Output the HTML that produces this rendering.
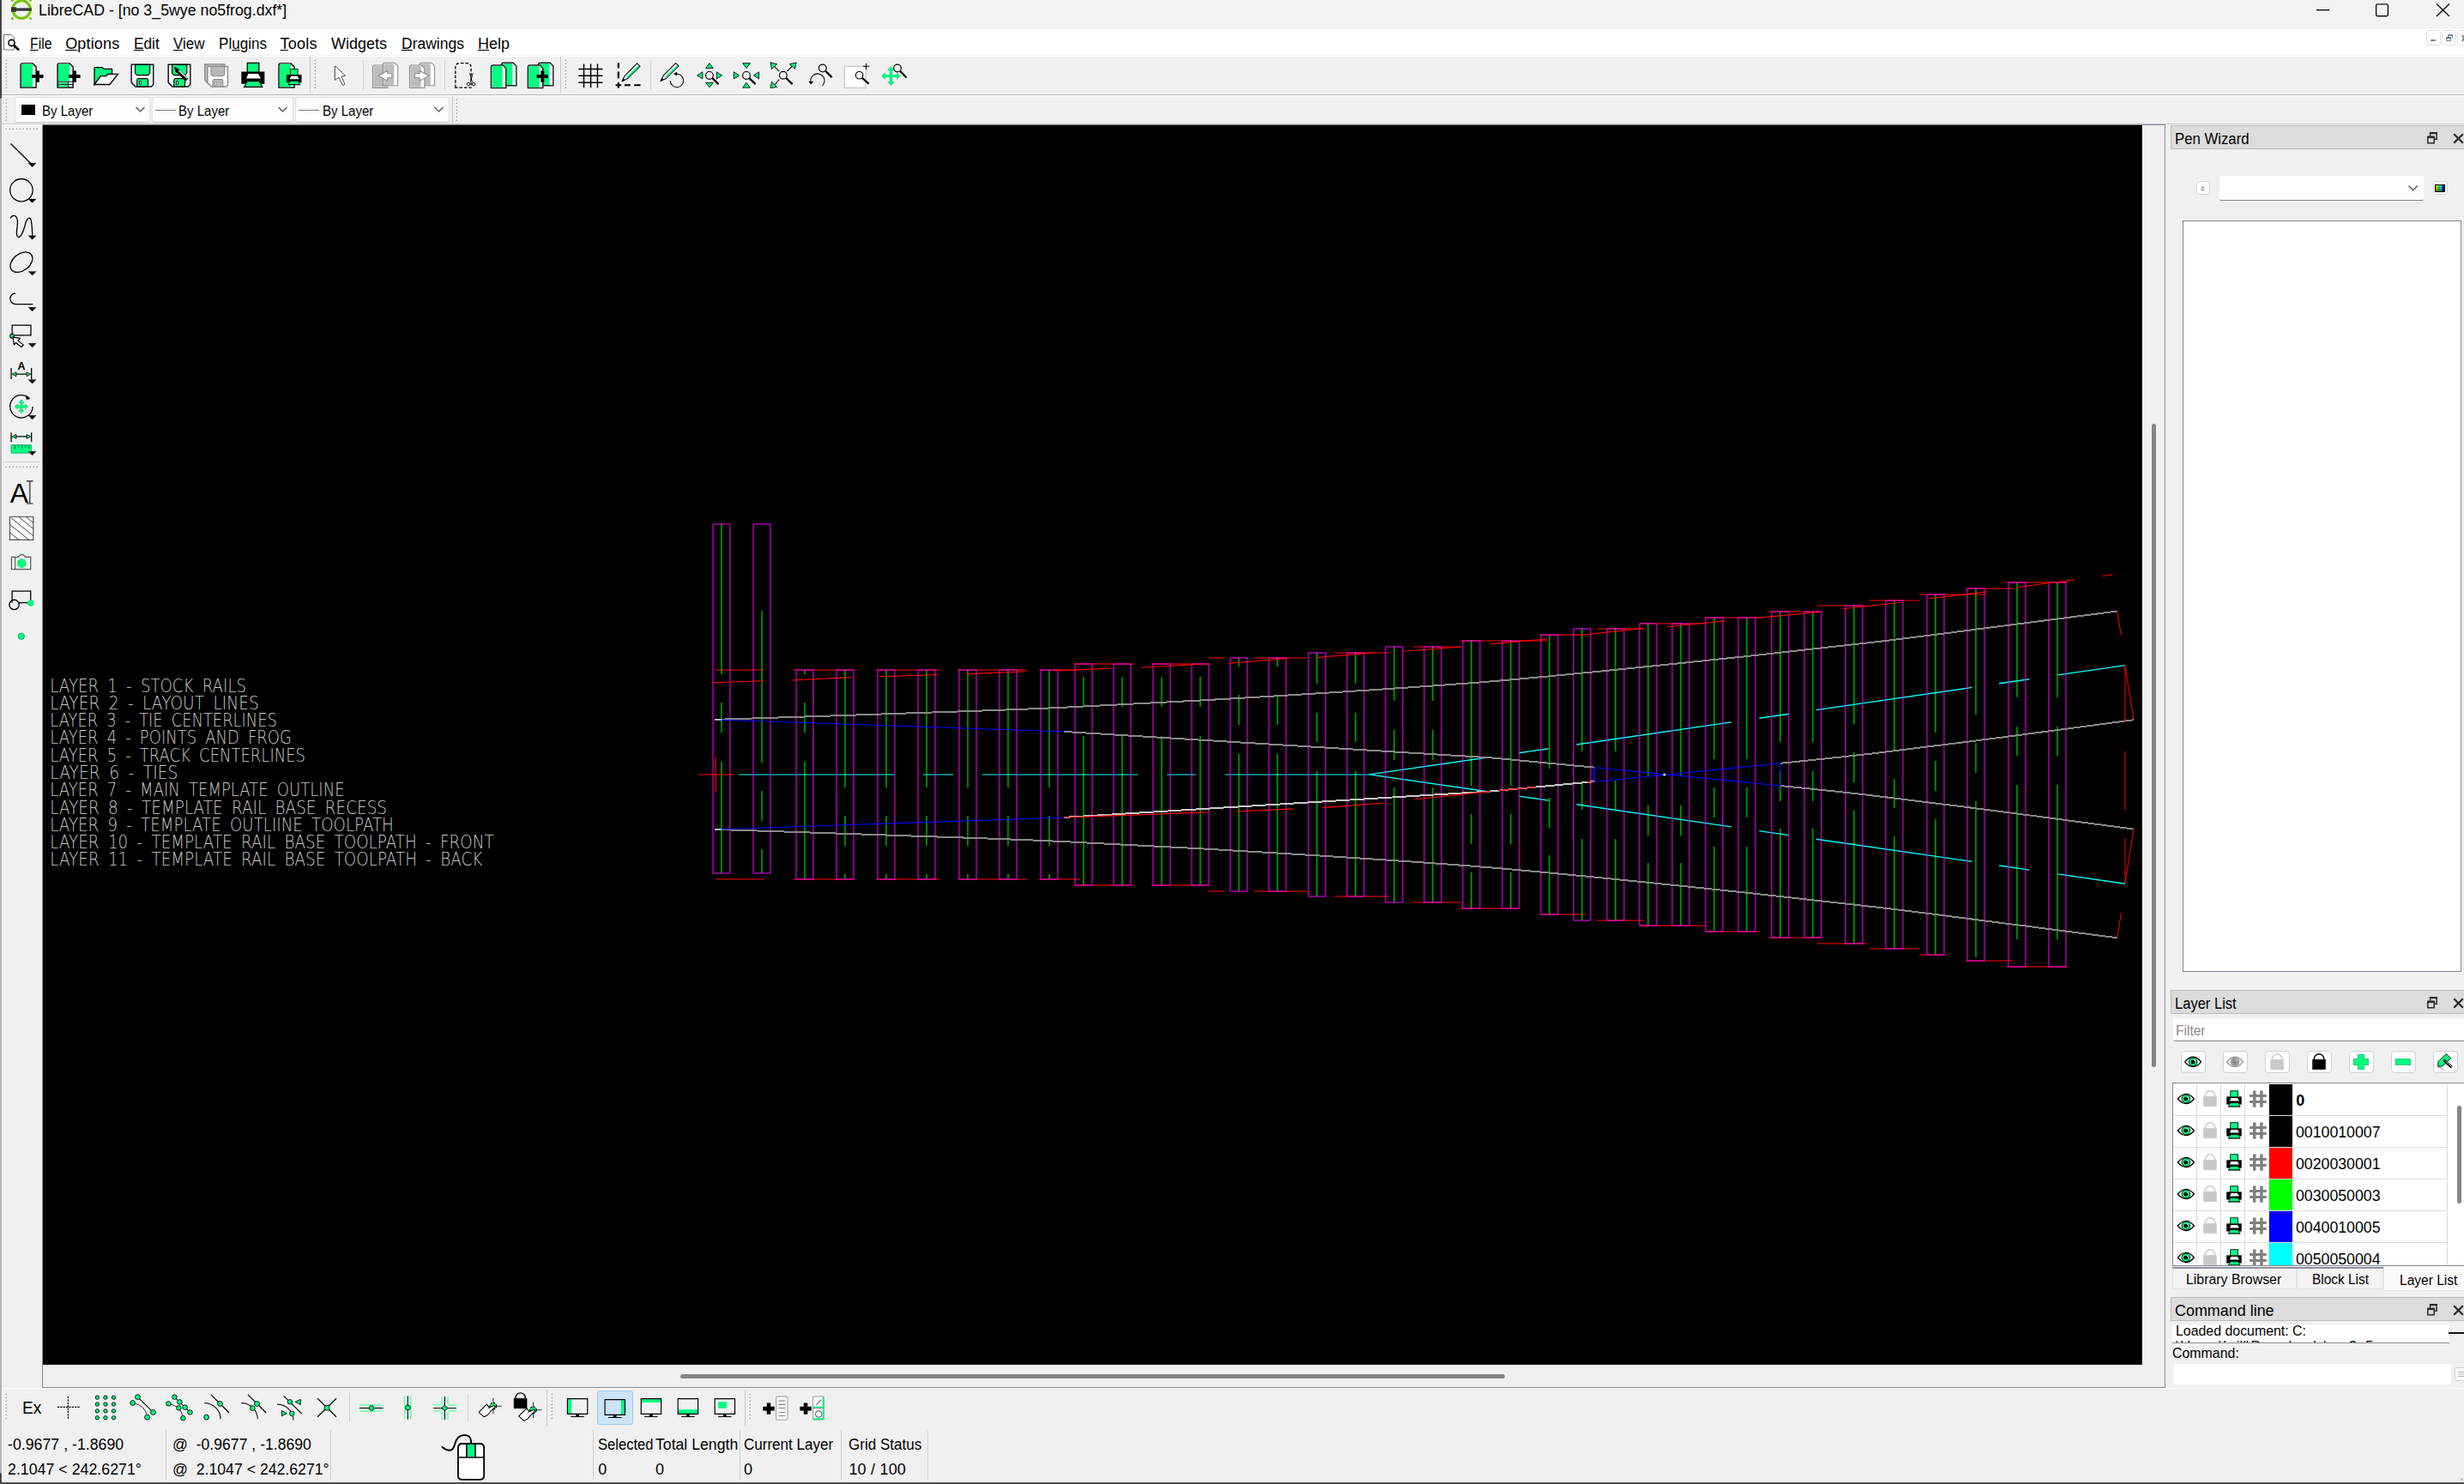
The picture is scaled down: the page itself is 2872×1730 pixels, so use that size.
<!DOCTYPE html>
<html lang="en"><head><meta charset="utf-8"><title>LibreCAD - [no 3_5wye no5frog.dxf*]</title>
<style>
html,body{margin:0;padding:0;}
body{width:2872px;height:1730px;overflow:hidden;background:#f0f0f0;position:relative;font-family:"Liberation Sans",sans-serif;}
.b{position:absolute;box-sizing:border-box;}
.t{position:absolute;white-space:pre;line-height:1;font-family:"Liberation Sans",sans-serif;}
svg{position:absolute;overflow:visible;}
u{text-decoration-thickness:1.3px;text-underline-offset:1.2px;}
</style></head>
<body>
<div class="b " style="left:0px;top:0px;width:2872px;height:34px;background:#f3f3f3;"></div>
<div class="b " style="left:0px;top:34px;width:2872px;height:30px;background:#ffffff;"></div>
<div class="b " style="left:0px;top:64px;width:2872px;height:1px;background:#f1f1f1;"></div>
<div class="b " style="left:0px;top:65px;width:2872px;height:1px;background:#ffffff;"></div>
<div class="b " style="left:0px;top:66px;width:2872px;height:45px;background:#f0f0f0;"></div>
<div class="b " style="left:0px;top:110px;width:2872px;height:1px;background:#b9b9b9;"></div>
<div class="b " style="left:0px;top:111px;width:2872px;height:1px;background:#fbfbfb;"></div>
<div class="b " style="left:0px;top:112px;width:2872px;height:34px;background:#f0f0f0;"></div>
<div class="b " style="left:0px;top:0px;width:2px;height:1730px;background:#b4b4b4;"></div>
<div class="b " style="left:0px;top:0px;width:2px;height:115px;background:#444444;border-radius:0 0 2px 0;"></div>
<div class="b " style="left:0px;top:1717px;width:2px;height:13px;background:#484848;border-radius:0 2px 0 0;"></div>
<div class="b " style="left:2px;top:1619px;width:1px;height:109px;background:#fbfbfb;"></div>
<div class="b " style="left:2px;top:0px;width:1px;height:34px;background:#fbfbfb;"></div>
<div class="b " style="left:49px;top:145px;width:2475px;height:1473px;background:#f0f0f0;border:1px solid #838b97;"></div>
<div class="b " style="left:50px;top:146px;width:2447px;height:1445px;background:#000;"></div>
<div class="b " style="left:50px;top:1591px;width:2448px;height:1px;background:#fff;"></div>
<div class="b " style="left:2497px;top:146px;width:1px;height:1446px;background:#fff;"></div>
<div class="b " style="left:2px;top:1618px;width:2870px;height:1px;background:#fdfdfd;"></div>
<div class="b " style="left:2524px;top:146px;width:1px;height:1473px;background:#fafafa;"></div>
<div class="b " style="left:2508px;top:493.5px;width:5px;height:750px;background:#858585;border-radius:2.5px;"></div>
<div class="b " style="left:793px;top:1602px;width:961px;height:5px;background:#858585;border-radius:2.5px;"></div>
<svg style="left:50px;top:146px" width="2447" height="1445" viewBox="50 146 2447 1445">
<g fill="none" style="mix-blend-mode:normal">
<path d="M834 781H891M834 1025H891M924 781H995M924 1025H995M1021 781H1095M1021 1025H1095M1116 781H1197M1116 1025H1197M1211 781H1259M1211 1025H1259M1252 774H1320M1252 1032H1320M1342 774H1410M1342 1032H1410M1408 767H1427M1408 1039H1427M1461 767H1523M1461 1039H1523M1556 761H1619M1556 1045H1619M1647 754H1703M1647 1052H1703M1702 747H1804M1702 1059H1771M1795 740H1846M1795 1066H1848M1861 733H1916M1861 1073H1916M1911 727H1988M1911 1079H1988M1987 720H2052M1987 1086H2052M2061 713H2123M2061 1093H2123M2118 706H2176M2118 1100H2176M2179 700H2237M2179 1106H2237M2237 693H2314M2237 1113H2266M2292 686H2346M2292 1120H2346M2339 679H2409M2339 1127H2409" stroke="#ff0000" stroke-width="1"/>
<path d="M841 610V786M841 819V854M841 888V1018M888 712V889M888 922V957M888 990V1018M938 781V786M938 819V854M938 888V1025M985 781V918M985 951V986M985 1019V1025M1033 781V918M1033 951V986M1033 1019V1025M1080 781V918M1080 951V986M1080 1019V1025M1128 781V918M1128 951V986M1128 1019V1025M1175 781V918M1175 951V986M1175 1019V1025M1223 781V918M1223 951V986M1223 1019V1025M1263 789V824M1263 858V1032M1308 789V824M1308 858V1032M1354 789V824M1354 858V1032M1399 789V824M1399 858V1032M1444 766V777M1444 810V845M1444 879V1039M1489 766V777M1489 810V845M1489 879V1039M1535 760V797M1535 831V865M1535 899V1045M1580 760V797M1580 831V865M1580 899V1045M1625 753V817M1625 851V886M1625 918V1052M1670 753V817M1670 851V886M1670 918V1052M1715 746V916M1715 949V984M1715 1017V1059M1761 746V916M1761 949V984M1761 1017V1059M1806 740V896M1806 930V965M1806 997V1066M1844 732V876M1844 910V944M1844 978V1073M1883 732V876M1883 910V944M1883 978V1073M1921 726V905M1921 939V974M1921 1006V1079M1959 726V905M1959 939V974M1959 1006V1079M1998 720V885M1998 918V953M1998 987V1086M2036 720V885M2036 918V953M2036 987V1086M2075 713V865M2075 899V934M2075 966V1093M2113 713V865M2113 899V934M2113 966V1093M2161 705V844M2161 877V912M2161 945V1100M2208 700V874M2208 908V942M2208 975V1106M2256 693V854M2256 887V922M2256 955V1113M2303 686V833M2303 866V901M2303 934V1116M2351 679V813M2351 847V881M2351 915V1095M2398 679V813M2398 847V881M2398 915V1095" stroke="#00ff00" stroke-width="1"/>
<path d="M861 903H1043M1076 903H1111M1145 903H1326M1360 903H1394M1428 903H1596" stroke="#00ffff" stroke-width="1"/>
<path d="M1595.8 902.9L1737.3 882.5M1595.8 902.9L1737.3 923.3M1770.5 877.7L1805.0 872.7M1770.5 928.1L1805.0 933.1M1837.5 868.0L2017.9 841.9M1837.5 937.8L2017.9 963.9M2050.4 837.2L2085.1 832.2M2050.4 968.6L2085.1 973.6M2117.0 827.6L2298.6 801.4M2117.0 978.2L2298.6 1004.4M2330.1 796.8L2365.5 791.7M2330.1 1009.0L2365.5 1014.1M2398.4 786.9L2476.9 775.6M2398.4 1018.9L2476.9 1030.2" stroke="#00ffff" stroke-width="1.4"/>
<path d="M831 610.5V1018.5M851 610.5V1018.5M831.5 611H850.5M831.5 1018H850.5M878 610.5V1018.5M898 610.5V1018.5M878.5 611H897.5M878.5 1018H897.5M928 780.5V1025.5M948 780.5V1025.5M928.5 781H947.5M928.5 1025H947.5M975 780.5V1025.5M995 780.5V1025.5M975.5 781H994.5M975.5 1025H994.5M1023 780.5V1025.5M1043 780.5V1025.5M1023.5 781H1042.5M1023.5 1025H1042.5M1070 780.5V1025.5M1090 780.5V1025.5M1070.5 781H1089.5M1070.5 1025H1089.5M1118 780.5V1025.5M1138 780.5V1025.5M1118.5 781H1137.5M1118.5 1025H1137.5M1165 780.5V1025.5M1185 780.5V1025.5M1165.5 781H1184.5M1165.5 1025H1184.5M1213 780.5V1025.5M1233 780.5V1025.5M1213.5 781H1232.5M1213.5 1025H1232.5M1253 773.5V1032.5M1273 773.5V1032.5M1253.5 774H1272.5M1253.5 1032H1272.5M1298 773.5V1032.5M1318 773.5V1032.5M1298.5 774H1317.5M1298.5 1032H1317.5M1344 773.5V1032.5M1364 773.5V1032.5M1344.5 774H1363.5M1344.5 1032H1363.5M1389 773.5V1032.5M1409 773.5V1032.5M1389.5 774H1408.5M1389.5 1032H1408.5M1434 766.5V1039.5M1454 766.5V1039.5M1434.5 767H1453.5M1434.5 1039H1453.5M1479 766.5V1039.5M1499 766.5V1039.5M1479.5 767H1498.5M1479.5 1039H1498.5M1525 760.5V1045.5M1545 760.5V1045.5M1525.5 761H1544.5M1525.5 1045H1544.5M1570 760.5V1045.5M1590 760.5V1045.5M1570.5 761H1589.5M1570.5 1045H1589.5M1615 753.5V1052.5M1635 753.5V1052.5M1615.5 754H1634.5M1615.5 1052H1634.5M1660 753.5V1052.5M1680 753.5V1052.5M1660.5 754H1679.5M1660.5 1052H1679.5M1705 746.5V1059.5M1725 746.5V1059.5M1705.5 747H1724.5M1705.5 1059H1724.5M1751 746.5V1059.5M1771 746.5V1059.5M1751.5 747H1770.5M1751.5 1059H1770.5M1796 739.5V1066.5M1816 739.5V1066.5M1796.5 740H1815.5M1796.5 1066H1815.5M1834 732.5V1073.5M1854 732.5V1073.5M1834.5 733H1853.5M1834.5 1073H1853.5M1873 732.5V1073.5M1893 732.5V1073.5M1873.5 733H1892.5M1873.5 1073H1892.5M1911 726.5V1079.5M1931 726.5V1079.5M1911.5 727H1930.5M1911.5 1079H1930.5M1949 726.5V1079.5M1969 726.5V1079.5M1949.5 727H1968.5M1949.5 1079H1968.5M1988 719.5V1086.5M2008 719.5V1086.5M1988.5 720H2007.5M1988.5 1086H2007.5M2026 719.5V1086.5M2046 719.5V1086.5M2026.5 720H2045.5M2026.5 1086H2045.5M2065 712.5V1093.5M2085 712.5V1093.5M2065.5 713H2084.5M2065.5 1093H2084.5M2103 712.5V1093.5M2123 712.5V1093.5M2103.5 713H2122.5M2103.5 1093H2122.5M2151 705.5V1100.5M2171 705.5V1100.5M2151.5 706H2170.5M2151.5 1100H2170.5M2198 699.5V1106.5M2218 699.5V1106.5M2198.5 700H2217.5M2198.5 1106H2217.5M2246 692.5V1113.5M2266 692.5V1113.5M2246.5 693H2265.5M2246.5 1113H2265.5M2293 685.5V1120.5M2313 685.5V1120.5M2293.5 686H2312.5M2293.5 1120H2312.5M2341 678.5V1127.5M2361 678.5V1127.5M2341.5 679H2360.5M2341.5 1127H2360.5M2388 678.5V1127.5M2408 678.5V1127.5M2388.5 679H2407.5M2388.5 1127H2407.5" stroke="#ff00ff" stroke-width="1"/>
<path d="M833.5 838.9C867.2 837.8 968.2 834.6 1036.0 832.2C1103.8 829.8 1165.2 828.2 1240.0 824.7C1314.8 821.2 1403.3 816.5 1485.0 811.5C1566.7 806.5 1651.7 801.3 1730.0 795.0C1808.3 788.7 1880.0 781.1 1955.0 773.5C2030.0 765.9 2118.5 756.2 2180.0 749.1C2241.5 742.0 2276.0 737.1 2324.0 731.0C2372.0 724.9 2443.8 715.6 2467.8 712.5M833.5 966.9C867.2 968.0 968.2 971.2 1036.0 973.6C1103.8 976.0 1165.2 977.6 1240.0 981.1C1314.8 984.5 1403.3 989.3 1485.0 994.3C1566.7 999.2 1651.7 1004.5 1730.0 1010.8C1808.3 1017.1 1880.0 1024.7 1955.0 1032.3C2030.0 1039.9 2118.5 1049.6 2180.0 1056.7C2241.5 1063.8 2276.0 1068.7 2324.0 1074.8C2372.0 1080.9 2443.8 1090.2 2467.8 1093.3M1240.2 852.9L1737.0 883.3L1858.8 894.7M2075.2 889.8C2092.7 887.9 2137.5 883.7 2180.0 878.7C2222.5 873.7 2278.8 866.6 2330.0 860.0C2381.2 853.4 2460.8 842.7 2487.0 839.2M2075.2 916.0C2092.7 917.9 2137.5 922.1 2180.0 927.1C2222.5 932.1 2278.8 939.2 2330.0 945.8C2381.2 952.4 2460.8 963.1 2487.0 966.6" stroke="#8a8a8a" stroke-width="2" shape-rendering="crispEdges"/>
<path d="M1240.2 952.9L1737.0 922.5L1858.8 911.1" stroke="#c8c8c8" stroke-width="2" shape-rendering="crispEdges"/>
<path d="M831.0 795.8L890.5 793.7M922.4 793.0L991.6 789.6M1024.4 788.7L1093.2 786.5M1126.4 785.6L1195.2 782.8M1228.4 781.9L1296.0 779.0M1329.8 778.0L1399.0 774.5M1431.5 773.3L1499.7 767.7M1533.8 766.5L1602.0 760.9M1636.0 759.3L1702.7 754.0M1737.3 750.7L1804.0 744.8M1839.6 740.7L1915.6 732.4M1942.9 730.8L2011.0 723.7M2045.8 720.6L2120.2 713.5M2147.3 709.7L2215.6 702.3M2248.9 697.8L2316.1 689.7M2350.4 684.8L2418.0 675.7M2450.3 671.5L2462.5 669.8M1239.3 953.0L1406.7 946.9M1440.8 946.0L1507.4 942.9M1541.5 941.6L1613.4 936.0M1648.5 931.7L1737.0 922.6M1746.0 921.6L1790.0 917.6M1850.0 912.2L1858.8 911.2M813.3 903.0L854.6 903.0M834.0 882.3L834.0 923.2" stroke="#ff0000" stroke-width="1.15"/>
<path d="M2467.8 712.5L2472.3 740.5M2476.9 775.6L2487.0 839.0M2477.0 775.6L2477.0 842.1M2477.0 875.7L2477.0 944.0M2477.0 977.3L2477.0 1029.8M2487.0 966.4L2476.9 1029.8M2472.3 1064.9L2467.8 1092.9" stroke="#ff0000" stroke-width="1"/>
<path d="M833.5 838.9L1240.2 852.9M833.5 966.9L1240.2 952.9M1858.8 894.7L2075.2 915.9M1858.8 911.2L2075.2 889.8M1858.8 894.7Q1856.5 903 1858.8 911.2M1858.8 894.7L1858.8 911.2M2075.2 889.8L2075.2 915.9" stroke="#0000ff" stroke-width="1.05"/>
<circle cx="1940" cy="903" r="1.6" fill="#ddddff" stroke="none"/>
<path d="M833 838.9h8M833 966.9h8" stroke="#c8c8ff" stroke-width="1.8"/>
</g>
<g font-family="'DejaVu Sans','Liberation Sans',sans-serif" font-weight="200" font-size="20.6" fill="#c8c8c8" style="white-space:pre" word-spacing="5">
<text x="58.3" y="806.5" textLength="228.8" lengthAdjust="spacingAndGlyphs" xml:space="preserve">LAYER 1 - STOCK RAILS</text>
<text x="58.3" y="826.8" textLength="243.4" lengthAdjust="spacingAndGlyphs" xml:space="preserve">LAYER 2 - LAYOUT LINES</text>
<text x="58.3" y="847.1" textLength="264.6" lengthAdjust="spacingAndGlyphs" xml:space="preserve">LAYER 3 - TIE CENTERLINES</text>
<text x="58.3" y="867.3" textLength="281.7" lengthAdjust="spacingAndGlyphs" xml:space="preserve">LAYER 4 - POINTS AND FROG</text>
<text x="58.3" y="887.6" textLength="297.7" lengthAdjust="spacingAndGlyphs" xml:space="preserve">LAYER 5 - TRACK CENTERLINES</text>
<text x="58.3" y="907.9" textLength="149.2" lengthAdjust="spacingAndGlyphs" xml:space="preserve">LAYER 6 - TIES</text>
<text x="58.3" y="928.2" textLength="343.3" lengthAdjust="spacingAndGlyphs" xml:space="preserve">LAYER 7 - MAIN TEMPLATE OUTLINE</text>
<text x="58.3" y="948.5" textLength="392.7" lengthAdjust="spacingAndGlyphs" xml:space="preserve">LAYER 8 - TEMPLATE RAIL BASE RECESS</text>
<text x="58.3" y="968.7" textLength="400.5" lengthAdjust="spacingAndGlyphs" xml:space="preserve">LAYER 9 - TEMPLATE OUTLIINE TOOLPATH</text>
<text x="58.3" y="989.0" textLength="517.4" lengthAdjust="spacingAndGlyphs" xml:space="preserve">LAYER 10 - TEMPLATE RAIL BASE TOOLPATH - FRONT</text>
<text x="58.3" y="1009.3" textLength="504.0" lengthAdjust="spacingAndGlyphs" xml:space="preserve">LAYER 11 - TEMPLATE RAIL BASE TOOLPATH - BACK</text>
</g>
</svg>
<div class="t" style="left:45.40px;top:3px;font-size:18px;color:#000;transform:scaleX(0.9865);transform-origin:0 0;">LibreCAD - [no 3_5wye no5frog.dxf*]</div>
<svg style="left:4px;top:0" width="36" height="26" viewBox="4 0 36 26"><circle cx="25.1" cy="11.1" r="10.3" fill="none" stroke="#74c906" stroke-width="3.15"/><path d="M13 -1h2.8v2.7H13zM34.1 -1h2.8v2.7h-2.8zM13 20.2h2.8v2.7H13zM34.1 20.2h2.8v2.7h-2.8z" fill="#74c906"/><path d="M18 11.05H36.8" stroke="#383838" stroke-width="3.3"/><rect x="13" y="8.3" width="5.9" height="5.6" fill="#383838"/></svg>
<svg style="left:2690px;top:0" width="182" height="34" viewBox="2690 0 182 34" fill="none" stroke="#111" stroke-width="1.4"><path d="M2700 11.7h15.2"/><rect x="2769.6" y="4.9" width="13.8" height="13.8" rx="1.6"/><path d="M2840 4.4l15 14.6M2855 4.4l-15 14.6"/></svg>
<div class="t" style="left:34.50px;top:42px;font-size:18px;color:#000;transform:scaleX(0.8788);transform-origin:0 0;"><u>F</u>ile</div>
<div class="t" style="left:76.20px;top:42px;font-size:18px;color:#000;letter-spacing:0.159px;"><u>O</u>ptions</div>
<div class="t" style="left:156.00px;top:42px;font-size:18px;color:#000;transform:scaleX(0.9571);transform-origin:0 0;"><u>E</u>dit</div>
<div class="t" style="left:202.00px;top:42px;font-size:18px;color:#000;transform:scaleX(0.9431);transform-origin:0 0;"><u>V</u>iew</div>
<div class="t" style="left:255.40px;top:42px;font-size:18px;color:#000;transform:scaleX(0.9501);transform-origin:0 0;">Pl<u>u</u>gins</div>
<div class="t" style="left:326.60px;top:42px;font-size:18px;color:#000;letter-spacing:0.192px;"><u>T</u>ools</div>
<div class="t" style="left:385.50px;top:42px;font-size:18px;color:#000;transform:scaleX(0.9980);transform-origin:0 0;">Widgets</div>
<div class="t" style="left:467.50px;top:42px;font-size:18px;color:#000;transform:scaleX(0.9729);transform-origin:0 0;"><u>D</u>rawings</div>
<div class="t" style="left:556.90px;top:42px;font-size:18px;color:#000;transform:scaleX(0.9992);transform-origin:0 0;"><u>H</u>elp</div>
<svg style="left:3px;top:38px" width="24" height="24" viewBox="3 38 24 24"><path d="M4.5 40.5h9l3 3v14.5h-12z" fill="#fff" stroke="#777" stroke-width="1"/><circle cx="13.5" cy="50" r="3.6" fill="none" stroke="#000" stroke-width="1.6"/><path d="M16 52.7l6 5.6" stroke="#000" stroke-width="2.6"/></svg>
<div class="b " style="left:2828px;top:35px;width:17px;height:18px;background:#ffffff;border:1px solid #e2e2e2;border-radius:3px;"></div>
<div class="b " style="left:2846px;top:35px;width:17px;height:18px;background:#ffffff;border:1px solid #e2e2e2;border-radius:3px;"></div>
<div class="b " style="left:2864px;top:35px;width:17px;height:18px;background:#ffffff;border:1px solid #e2e2e2;border-radius:3px;"></div>
<svg style="left:2828px;top:35px" width="44" height="19" viewBox="2828 35 44 19" fill="none" stroke="#66788c" stroke-width="1"><rect x="2833.1" y="46.1" width="5.8" height="1.8" fill="#66788c" stroke="none"/><rect x="2853.2" y="40.1" width="5.7" height="1.7" fill="#66788c" stroke="none"/><path d="M2853.7 41V43.3M2858.4 41V44.8"/><rect x="2851.1" y="43.3" width="5.8" height="1.9" fill="#66788c" stroke="none"/><rect x="2851.6" y="43.8" width="4.8" height="3.6"/><path d="M2869.8 41.2l5.2 6.6M2875 41.2l-5.2 6.6" stroke-width="1.9"/></svg>
<svg style="left:0;top:64px" width="1100" height="84" viewBox="0 64 1100 84"><path d="M5 70l2 -2v1zM5 74l2 -2v1zM5 78l2 -2v1zM5 82l2 -2v1zM5 86l2 -2v1zM5 90l2 -2v1zM5 94l2 -2v1zM5 98l2 -2v1zM5 102l2 -2v1z" fill="#ffffff"/><path d="M6 71l2 -2v2zM6 75l2 -2v2zM6 79l2 -2v2zM6 83l2 -2v2zM6 87l2 -2v2zM6 91l2 -2v2zM6 95l2 -2v2zM6 99l2 -2v2zM6 103l2 -2v2z" fill="#a0a0a0"/><path d="M365 70l2 -2v1zM365 74l2 -2v1zM365 78l2 -2v1zM365 82l2 -2v1zM365 86l2 -2v1zM365 90l2 -2v1zM365 94l2 -2v1zM365 98l2 -2v1zM365 102l2 -2v1z" fill="#ffffff"/><path d="M366 71l2 -2v2zM366 75l2 -2v2zM366 79l2 -2v2zM366 83l2 -2v2zM366 87l2 -2v2zM366 91l2 -2v2zM366 95l2 -2v2zM366 99l2 -2v2zM366 103l2 -2v2z" fill="#a0a0a0"/><path d="M657 70l2 -2v1zM657 74l2 -2v1zM657 78l2 -2v1zM657 82l2 -2v1zM657 86l2 -2v1zM657 90l2 -2v1zM657 94l2 -2v1zM657 98l2 -2v1zM657 102l2 -2v1z" fill="#ffffff"/><path d="M658 71l2 -2v2zM658 75l2 -2v2zM658 79l2 -2v2zM658 83l2 -2v2zM658 87l2 -2v2zM658 91l2 -2v2zM658 95l2 -2v2zM658 99l2 -2v2zM658 103l2 -2v2z" fill="#a0a0a0"/><path d="M5 116l2 -2v1zM5 120l2 -2v1zM5 124l2 -2v1zM5 128l2 -2v1zM5 132l2 -2v1zM5 136l2 -2v1zM5 140l2 -2v1z" fill="#ffffff"/><path d="M6 117l2 -2v2zM6 121l2 -2v2zM6 125l2 -2v2zM6 129l2 -2v2zM6 133l2 -2v2zM6 137l2 -2v2zM6 141l2 -2v2z" fill="#a0a0a0"/><path d="M530 116l2 -2v1zM530 120l2 -2v1zM530 124l2 -2v1zM530 128l2 -2v1zM530 132l2 -2v1zM530 136l2 -2v1zM530 140l2 -2v1z" fill="#ffffff"/><path d="M531 117l2 -2v2zM531 121l2 -2v2zM531 125l2 -2v2zM531 129l2 -2v2zM531 133l2 -2v2zM531 137l2 -2v2zM531 141l2 -2v2z" fill="#a0a0a0"/><path d="M361.5 66v43M653.5 66v43M527.5 112v33" stroke="#c9c9c9"/><path d="M423.5 71v34M518.5 71v34M758.5 71v34" stroke="#d2d2d2"/></svg>
<div class="b " style="left:16.5px;top:113.3px;width:158.5px;height:29.3px;background:#fdfdfd;border:1px solid #e0e0e0;border-bottom:1px solid #c8c8c8;border-radius:3.5px;"></div>
<div class="t" style="left:48.50px;top:122px;font-size:16.8px;color:#000;transform:scaleX(0.8953);transform-origin:0 0;">By Layer</div>
<svg style="left:157.5px;top:124px" width="11" height="8" viewBox="0 0 11 8"><path d="M0.5 1l5 5 5-5" fill="none" stroke="#444" stroke-width="1.1"/></svg>
<div class="b " style="left:176.5px;top:113.3px;width:165.5px;height:29.3px;background:#fdfdfd;border:1px solid #e0e0e0;border-bottom:1px solid #c8c8c8;border-radius:3.5px;"></div>
<div class="t" style="left:208.30px;top:122px;font-size:16.8px;color:#000;transform:scaleX(0.8953);transform-origin:0 0;">By Layer</div>
<svg style="left:324px;top:124px" width="11" height="8" viewBox="0 0 11 8"><path d="M0.5 1l5 5 5-5" fill="none" stroke="#444" stroke-width="1.1"/></svg>
<div class="b " style="left:343.5px;top:113.3px;width:180.5px;height:29.3px;background:#fdfdfd;border:1px solid #e0e0e0;border-bottom:1px solid #c8c8c8;border-radius:3.5px;"></div>
<div class="t" style="left:375.50px;top:122px;font-size:16.8px;color:#000;transform:scaleX(0.8953);transform-origin:0 0;">By Layer</div>
<svg style="left:506px;top:124px" width="11" height="8" viewBox="0 0 11 8"><path d="M0.5 1l5 5 5-5" fill="none" stroke="#444" stroke-width="1.1"/></svg>
<div class="b " style="left:25px;top:122px;width:16px;height:12px;background:#000;"></div>
<div class="b " style="left:181px;top:128px;width:23.5px;height:1px;background:#777;"></div>
<div class="b " style="left:348px;top:128px;width:23.5px;height:1px;background:#777;"></div>
<div class="b " style="left:0px;top:144px;width:2872px;height:1px;background:#c6c6c6;"></div>
<div class="b " style="left:2px;top:145px;width:47px;height:1px;background:#fff;"></div>
<div class="b " style="left:2525px;top:145px;width:347px;height:1px;background:#fbfbfb;"></div>
<div class="b " style="left:2px;top:146px;width:46px;height:1471px;background:#f0f0f0;"></div>
<div class="b " style="left:2px;top:146px;width:46px;height:1px;background:#fff;"></div>
<svg style="left:0;top:146px" width="50" height="400" viewBox="0 146 50 400"><path d="M6 151l2 -2v2zM6 545l2 -2v2zM10 151l2 -2v2zM10 545l2 -2v2zM14 151l2 -2v2zM14 545l2 -2v2zM18 151l2 -2v2zM18 545l2 -2v2zM22 151l2 -2v2zM22 545l2 -2v2zM26 151l2 -2v2zM26 545l2 -2v2zM30 151l2 -2v2zM30 545l2 -2v2zM34 151l2 -2v2zM34 545l2 -2v2zM38 151l2 -2v2zM38 545l2 -2v2zM42 151l2 -2v2zM42 545l2 -2v2z" fill="#a8a8a8"/><path d="M5 150l2 -2v1zM5 544l2 -2v1zM9 150l2 -2v1zM9 544l2 -2v1zM13 150l2 -2v1zM13 544l2 -2v1zM17 150l2 -2v1zM17 544l2 -2v1zM21 150l2 -2v1zM21 544l2 -2v1zM25 150l2 -2v1zM25 544l2 -2v1zM29 150l2 -2v1zM29 544l2 -2v1zM33 150l2 -2v1zM33 544l2 -2v1zM37 150l2 -2v1zM37 544l2 -2v1zM41 150l2 -2v1zM41 544l2 -2v1z" fill="#fff"/><path d="M3 538.5h44" stroke="#d0d0d0"/></svg>
<div class="b " style="left:2530px;top:146px;width:345px;height:28px;background:#dcdcdc;border:1px solid #bcbcbc;"></div>
<div class="t" style="left:2535.30px;top:153px;font-size:18px;color:#000;transform:scaleX(0.9307);transform-origin:0 0;">Pen Wizard</div>
<svg style="left:2826px;top:146px" width="46" height="28" viewBox="2826 0 46 28" fill="none" stroke="#2a2a2a" stroke-width="1.5"><path d="M2832.6 12.7V8.8H2840.1V16.2H2837.9"/><rect x="2831.9" y="8" width="8.9" height="2.2" fill="#2a2a2a" stroke="none"/><rect x="2829.8" y="13.5" width="7.4" height="7.3"/><rect x="2829.1" y="12.7" width="8.8" height="2.4" fill="#2a2a2a" stroke="none"/><path d="M2860.2 10.3l10.6 10.4M2870.8 10.3l-10.6 10.4" stroke-width="2.3"/></svg>
<div class="b " style="left:2559.5px;top:211px;width:16px;height:15.5px;background:#fdfdfd;border:1px solid #d4d4d4;border-radius:3px;"></div>
<div class="t" style="left:2565.00px;top:215px;font-size:9px;color:#777;">±</div>
<div class="b " style="left:2587px;top:205px;width:238px;height:28.6px;background:#fff;border-bottom:1px solid #868686;border-radius:2px;"></div>
<svg style="left:2807px;top:216px" width="12" height="7" viewBox="0 0 12 7"><path d="M0.5 0.5l5.2 5.2 5.2-5.2" fill="none" stroke="#444" stroke-width="1.1"/></svg>
<div class="b " style="left:2836px;top:211px;width:16.6px;height:15.5px;background:#fdfdfd;border:1px solid #d4d4d4;border-radius:3px;"></div>
<svg style="left:2838px;top:215px" width="12" height="9" viewBox="0 0 12 9"><defs><linearGradient id="rb" x1="0" x2="1" y1="0" y2="0"><stop offset="0" stop-color="#f00"/><stop offset=".2" stop-color="#ff0"/><stop offset=".4" stop-color="#0f0"/><stop offset=".6" stop-color="#0ff"/><stop offset=".8" stop-color="#00f"/><stop offset="1" stop-color="#f0f"/></linearGradient><linearGradient id="rk" x1="0" x2="0" y1="0" y2="1"><stop offset="0" stop-color="#000" stop-opacity="0"/><stop offset="1" stop-color="#000" stop-opacity=".55"/></linearGradient></defs><rect width="12" height="9" fill="url(#rb)"/><rect width="12" height="9" fill="url(#rk)"/><rect x=".5" y=".5" width="11" height="8" fill="none" stroke="#000"/></svg>
<div class="b " style="left:2544px;top:257px;width:324.5px;height:876px;background:#fff;border:1px solid #7f8793;"></div>
<div class="b " style="left:2530px;top:1154px;width:345px;height:28px;background:#dcdcdc;border:1px solid #bcbcbc;"></div>
<div class="t" style="left:2535.30px;top:1161px;font-size:18px;color:#000;transform:scaleX(0.9187);transform-origin:0 0;">Layer List</div>
<svg style="left:2826px;top:1154px" width="46" height="28" viewBox="2826 0 46 28" fill="none" stroke="#2a2a2a" stroke-width="1.5"><path d="M2832.6 12.7V8.8H2840.1V16.2H2837.9"/><rect x="2831.9" y="8" width="8.9" height="2.2" fill="#2a2a2a" stroke="none"/><rect x="2829.8" y="13.5" width="7.4" height="7.3"/><rect x="2829.1" y="12.7" width="8.8" height="2.4" fill="#2a2a2a" stroke="none"/><path d="M2860.2 10.3l10.6 10.4M2870.8 10.3l-10.6 10.4" stroke-width="2.3"/></svg>
<div class="b " style="left:2533px;top:1187px;width:345px;height:26.8px;background:#fff;border-bottom:1px solid #8c8c8c;border-radius:2px;"></div>
<div class="t" style="left:2535.50px;top:1194px;font-size:16.8px;color:#8a8a8a;transform:scaleX(0.9250);transform-origin:0 0;">Filter</div>
<div class="b " style="left:2542.3px;top:1224.7px;width:28.3px;height:26.7px;background:#fdfdfd;border:1px solid #d2d2d2;border-radius:4px;"></div>
<div class="b " style="left:2591.3px;top:1224.7px;width:28.3px;height:26.7px;background:#fdfdfd;border:1px solid #d2d2d2;border-radius:4px;"></div>
<div class="b " style="left:2640.3px;top:1224.7px;width:28.3px;height:26.7px;background:#fdfdfd;border:1px solid #d2d2d2;border-radius:4px;"></div>
<div class="b " style="left:2689.3px;top:1224.7px;width:28.3px;height:26.7px;background:#fdfdfd;border:1px solid #d2d2d2;border-radius:4px;"></div>
<div class="b " style="left:2738.3px;top:1224.7px;width:28.3px;height:26.7px;background:#fdfdfd;border:1px solid #d2d2d2;border-radius:4px;"></div>
<div class="b " style="left:2787.3px;top:1224.7px;width:28.3px;height:26.7px;background:#fdfdfd;border:1px solid #d2d2d2;border-radius:4px;"></div>
<div class="b " style="left:2836.3px;top:1224.7px;width:28.3px;height:26.7px;background:#fdfdfd;border:1px solid #d2d2d2;border-radius:4px;"></div>
<div class="b " style="left:2532px;top:1262px;width:345px;height:214px;background:#fff;border:1px solid #828a96;border-right:none;"></div>
<div class="b " style="left:2645px;top:1264px;width:27px;height:37px;background:#000;"></div>
<div class="b " style="left:2533px;top:1299.5px;width:320px;height:1px;background:#dcdcdc;"></div>
<div class="t" style="left:2676.20px;top:1274px;font-size:18px;color:#000;font-weight:bold;">0</div>
<div class="b " style="left:2645px;top:1301px;width:27px;height:37px;background:#000;"></div>
<div class="b " style="left:2533px;top:1336.5px;width:320px;height:1px;background:#dcdcdc;"></div>
<div class="t" style="left:2676.20px;top:1311px;font-size:18px;color:#000;transform:scaleX(0.9839);transform-origin:0 0;">0010010007</div>
<div class="b " style="left:2645px;top:1338px;width:27px;height:37px;background:#ff0000;"></div>
<div class="b " style="left:2533px;top:1373.5px;width:320px;height:1px;background:#dcdcdc;"></div>
<div class="t" style="left:2676.20px;top:1348px;font-size:18px;color:#000;transform:scaleX(0.9839);transform-origin:0 0;">0020030001</div>
<div class="b " style="left:2645px;top:1375px;width:27px;height:37px;background:#00ff00;"></div>
<div class="b " style="left:2533px;top:1410.5px;width:320px;height:1px;background:#dcdcdc;"></div>
<div class="t" style="left:2676.20px;top:1385px;font-size:18px;color:#000;transform:scaleX(0.9839);transform-origin:0 0;">0030050003</div>
<div class="b " style="left:2645px;top:1412px;width:27px;height:37px;background:#0000ff;"></div>
<div class="b " style="left:2533px;top:1447.5px;width:320px;height:1px;background:#dcdcdc;"></div>
<div class="t" style="left:2676.20px;top:1422px;font-size:18px;color:#000;transform:scaleX(0.9839);transform-origin:0 0;">0040010005</div>
<div class="b " style="left:2645px;top:1449px;width:27px;height:26px;background:#00ffff;"></div>
<div class="t" style="left:2676.20px;top:1459px;font-size:18px;color:#000;transform:scaleX(0.9839);transform-origin:0 0;clip-path:inset(0 0 3.0px 0);">0050050004</div>
<div class="b " style="left:2560.0px;top:1264px;width:1px;height:211px;background:#dcdcdc;"></div>
<div class="b " style="left:2588.0px;top:1264px;width:1px;height:211px;background:#dcdcdc;"></div>
<div class="b " style="left:2616.0px;top:1264px;width:1px;height:211px;background:#dcdcdc;"></div>
<div class="b " style="left:2644.0px;top:1264px;width:1px;height:211px;background:#dcdcdc;"></div>
<div class="b " style="left:2852.0px;top:1264px;width:1px;height:211px;background:#dcdcdc;"></div>
<div class="b " style="left:2864px;top:1289px;width:5px;height:114px;background:#858585;border-radius:2.5px;"></div>
<div class="b " style="left:2532px;top:1479px;width:144.5px;height:23.5px;background:#f3f3f3;border:1px solid #e2e2e2;border-top:none;"></div>
<div class="b " style="left:2676.5px;top:1479px;width:101px;height:23.5px;background:#f3f3f3;border:1px solid #e2e2e2;border-top:none;"></div>
<div class="b " style="left:2777.5px;top:1476px;width:100px;height:28.5px;background:#f9f9f9;border:1px solid #e6e6e6;border-top:none;"></div>
<div class="b " style="left:2532px;top:1477px;width:246px;height:2px;background:#8c939e;"></div>
<div class="t" style="left:2547.80px;top:1484px;font-size:16.8px;color:#000;transform:scaleX(0.9463);transform-origin:0 0;">Library Browser</div>
<div class="t" style="left:2695.00px;top:1484px;font-size:16.8px;color:#000;transform:scaleX(0.9191);transform-origin:0 0;">Block List</div>
<div class="t" style="left:2796.80px;top:1485px;font-size:16.8px;color:#000;transform:scaleX(0.9249);transform-origin:0 0;">Layer List</div>
<div class="b " style="left:2530px;top:1512px;width:345px;height:28px;background:#dcdcdc;border:1px solid #bcbcbc;"></div>
<div class="t" style="left:2535.30px;top:1519px;font-size:18px;color:#000;transform:scaleX(0.9960);transform-origin:0 0;">Command line</div>
<svg style="left:2826px;top:1512px" width="46" height="28" viewBox="2826 0 46 28" fill="none" stroke="#2a2a2a" stroke-width="1.5"><path d="M2832.6 12.7V8.8H2840.1V16.2H2837.9"/><rect x="2831.9" y="8" width="8.9" height="2.2" fill="#2a2a2a" stroke="none"/><rect x="2829.8" y="13.5" width="7.4" height="7.3"/><rect x="2829.1" y="12.7" width="8.8" height="2.4" fill="#2a2a2a" stroke="none"/><path d="M2860.2 10.3l10.6 10.4M2870.8 10.3l-10.6 10.4" stroke-width="2.3"/></svg>
<div class="b " style="left:2532px;top:1544px;width:323px;height:21.5px;background:#fff;border-bottom:1px solid #8c8c8c;overflow:hidden;"></div>
<div class="t" style="left:2536.30px;top:1544px;font-size:16.8px;color:#000;transform:scaleX(0.9472);transform-origin:0 0;">Loaded document: C:</div>
<div class="t" style="left:2536.30px;top:1562px;font-size:16.8px;color:#000;letter-spacing:0.252px;clip-path:inset(0 0 13.8px 0);">\Users\brill\Downloads\no 3_5</div>
<div class="b " style="left:2854px;top:1553px;width:18px;height:1.6px;background:#111;"></div>
<div class="t" style="left:2531.60px;top:1570px;font-size:16.8px;color:#000;transform:scaleX(0.9479);transform-origin:0 0;">Command:</div>
<div class="b " style="left:2533.6px;top:1590px;width:323.4px;height:24px;background:#fff;"></div>
<div class="b " style="left:2861px;top:1594px;width:14px;height:15.5px;background:#fdfdfd;border:1px solid #d0d0d0;border-radius:3px;"></div>
<svg style="left:2864px;top:1598px" width="8" height="8" viewBox="0 0 8 8"><path d="M1 1.5h7M1 4h7M1 6.5h7" stroke="#b0b0b0"/></svg>
<div class="b " style="left:3px;top:1619px;width:2869px;height:45px;background:#f0f0f0;"></div>
<div class="b " style="left:2868px;top:1723px;width:3px;height:3px;background:#c4c4c4;"></div>
<div class="t" style="left:25.60px;top:1631px;font-size:20px;color:#000;transform:scaleX(0.9596);transform-origin:0 0;">Ex</div>
<div class="b " style="left:695.5px;top:1620.5px;width:42.5px;height:40px;background:#cce4f7;border:1px solid #99c9ef;border-radius:3px;"></div>
<svg style="left:0;top:1619px" width="1000" height="111" viewBox="0 1619 1000 111"><path d="M5 1625l2 -2v1zM5 1629l2 -2v1zM5 1633l2 -2v1zM5 1637l2 -2v1zM5 1641l2 -2v1zM5 1645l2 -2v1zM5 1649l2 -2v1zM5 1653l2 -2v1z" fill="#ffffff"/><path d="M6 1626l2 -2v2zM6 1630l2 -2v2zM6 1634l2 -2v2zM6 1638l2 -2v2zM6 1642l2 -2v2zM6 1646l2 -2v2zM6 1650l2 -2v2zM6 1654l2 -2v2z" fill="#a0a0a0"/><path d="M641 1625l2 -2v1zM641 1629l2 -2v1zM641 1633l2 -2v1zM641 1637l2 -2v1zM641 1641l2 -2v1zM641 1645l2 -2v1zM641 1649l2 -2v1zM641 1653l2 -2v1z" fill="#ffffff"/><path d="M642 1626l2 -2v2zM642 1630l2 -2v2zM642 1634l2 -2v2zM642 1638l2 -2v2zM642 1642l2 -2v2zM642 1646l2 -2v2zM642 1650l2 -2v2zM642 1654l2 -2v2z" fill="#a0a0a0"/><path d="M872 1625l2 -2v1zM872 1629l2 -2v1zM872 1633l2 -2v1zM872 1637l2 -2v1zM872 1641l2 -2v1zM872 1645l2 -2v1zM872 1649l2 -2v1zM872 1653l2 -2v1z" fill="#ffffff"/><path d="M873 1626l2 -2v2zM873 1630l2 -2v2zM873 1634l2 -2v2zM873 1638l2 -2v2zM873 1642l2 -2v2zM873 1646l2 -2v2zM873 1650l2 -2v2zM873 1654l2 -2v2z" fill="#a0a0a0"/><path d="M407.5 1624v34M545.5 1624v34" stroke="#d2d2d2"/><path d="M637.5 1620v43M868.5 1620v43" stroke="#c9c9c9"/><path d="M193.5 1667v58M385.5 1667v58M691.5 1667v58M862.5 1667v58M980.5 1667v58" stroke="#cfcfcf"/></svg>
<div class="b " style="left:1080.5px;top:1667px;width:1px;height:58px;background:#d6d6d6;"></div>
<div class="t" style="left:8.50px;top:1675px;font-size:18px;color:#000;transform:scaleX(0.9861);transform-origin:0 0;">-0.9677 , -1.8690</div>
<div class="t" style="left:8.50px;top:1704px;font-size:18px;color:#000;transform:scaleX(0.9877);transform-origin:0 0;">2.1047 &lt; 242.6271°</div>
<div class="t" style="left:200.90px;top:1675px;font-size:18px;color:#000;transform:scaleX(0.9790);transform-origin:0 0;">@  -0.9677 , -1.8690</div>
<div class="t" style="left:200.90px;top:1704px;font-size:18px;color:#000;transform:scaleX(0.9811);transform-origin:0 0;">@  2.1047 &lt; 242.6271°</div>
<div class="t" style="left:697.20px;top:1675px;font-size:18px;color:#000;transform:scaleX(0.9206);transform-origin:0 0;">Selected</div>
<div class="t" style="left:763.70px;top:1675px;font-size:18px;color:#000;transform:scaleX(0.9809);transform-origin:0 0;">Total Length</div>
<div class="t" style="left:867.00px;top:1675px;font-size:18px;color:#000;transform:scaleX(0.9458);transform-origin:0 0;">Current Layer</div>
<div class="t" style="left:989.40px;top:1675px;font-size:18px;color:#000;transform:scaleX(0.9462);transform-origin:0 0;">Grid Status</div>
<div class="t" style="left:697.20px;top:1704px;font-size:18px;color:#000;">0</div>
<div class="t" style="left:764.00px;top:1704px;font-size:18px;color:#000;">0</div>
<div class="t" style="left:867.00px;top:1704px;font-size:18px;color:#000;">0</div>
<div class="t" style="left:989.40px;top:1704px;font-size:18px;color:#000;letter-spacing:0.205px;">10 / 100</div>
<div class="b " style="left:2px;top:1727px;width:2870px;height:1px;background:#fbfbfb;"></div>
<div class="b " style="left:0px;top:1728px;width:2872px;height:2px;background:#4e4e4e;"></div>
<svg style="left:0;top:64px" width="1100" height="48" viewBox="0 64 1100 48">
<g transform="translate(14,66) scale(0.07305) "><g transform="translate(0,0)"><path d="M138 492V133Q138 108 163 108H330L385 163V492Z" fill="#fff" stroke="#111" stroke-width="20" /><path d="M150 482V140Q150 120 170 120H310Q330 120 330 140V482Z" fill="#00ff7f" stroke="none" stroke-width="0" /></g><path d="M318 288.5H381.5V225H436.5V288.5H500V343.5H436.5V407H381.5V343.5H318Z" fill="#000" stroke="none" stroke-width="0" /><g transform="translate(589,0)"><path d="M138 492V133Q138 108 163 108H330L385 163V492Z" fill="#fff" stroke="#111" stroke-width="20" /><path d="M150 392V140Q150 120 170 120H310Q330 120 330 140V392Z" fill="#00ff7f" stroke="none" stroke-width="0" /><path d="M150 410H300V437H150ZM150 455H300V482H150Z" fill="#00ff7f" stroke="none" stroke-width="0" /><path d="M138 400H385M138 446H385M309 400V492" fill="none" stroke="#000" stroke-width="12" /></g><path d="M907 288.5H970.5V225H1025.5V288.5H1089V343.5H1025.5V407H970.5V343.5H907Z" fill="#000" stroke="none" stroke-width="0" /><path d="M1315 445V185Q1315 172 1328 172H1440L1465 197H1595V280H1530L1500 310H1415Z" fill="#00ff7f" stroke="#000" stroke-width="18" /><path d="M1415 310H1500L1530 280H1690L1560 445H1315Z" fill="#fff" stroke="#000" stroke-width="18" /><g transform="translate(1895,120) scale(1)"><path d="M10 8H360V325L327 358H73L10 292Z" fill="#fff" stroke="#111" stroke-width="20" /><path d="M70 8H305V145L275 175H100L70 145Z" fill="#00ff7f" stroke="#000" stroke-width="16" /><path d="M100 358V255Q100 230 125 230H250Q275 230 275 255V358Z" fill="#00ff7f" stroke="#000" stroke-width="16" /><path d="M137 270H163V325H137Z" fill="#fff" stroke="#000" stroke-width="12" /></g></g>
<g transform="translate(186,66) scale(0.07305) "><g transform="translate(130,120) scale(1)"><path d="M10 8H360V325L327 358H73L10 292Z" fill="#fff" stroke="#111" stroke-width="20" /><path d="M70 8H305V145L275 175H100L70 145Z" fill="#00ff7f" stroke="#000" stroke-width="16" /><path d="M100 358V255Q100 230 125 230H250Q275 230 275 255V358Z" fill="#00ff7f" stroke="#000" stroke-width="16" /><path d="M137 270H163V325H137Z" fill="#fff" stroke="#000" stroke-width="12" /></g><path d="M275 215L440 368" fill="none" stroke="#000" stroke-width="62" /><path d="M300 215L445 345" fill="none" stroke="#fff" stroke-width="18" /><path d="M228 160L318 205L262 258Z" fill="#000" stroke="none" stroke-width="0" /><g transform="translate(712,115) scale(0.9)"><path d="M10 8H360V325L327 358H73L10 292Z" fill="#bdbdbd" stroke="#8a8a8a" stroke-width="20" /><path d="M70 8H305V145L275 175H100L70 145Z" fill="#bdbdbd" stroke="#9a9a9a" stroke-width="16" /><path d="M100 358V255Q100 230 125 230H250Q275 230 275 255V358Z" fill="#bdbdbd" stroke="#9a9a9a" stroke-width="16" /><path d="M137 270H163V325H137Z" fill="#fff" stroke="#9a9a9a" stroke-width="12" /></g><g transform="translate(757,150) scale(0.92)"><path d="M10 8H360V325L327 358H73L10 292Z" fill="#fff" stroke="#8a8a8a" stroke-width="20" /><path d="M70 8H305V145L275 175H100L70 145Z" fill="#b9b9b9" stroke="#8a8a8a" stroke-width="16" /><path d="M100 358V255Q100 230 125 230H250Q275 230 275 255V358Z" fill="#b9b9b9" stroke="#8a8a8a" stroke-width="16" /><path d="M137 270H163V325H137Z" fill="#fff" stroke="#8a8a8a" stroke-width="12" /></g><g transform="translate(1490,292) scale(1)"><path d="M-185 -52H185V143H-185Z" fill="#000" stroke="none" stroke-width="0" /><path d="M-90 -192H95V-42H-90Z" fill="#00ff7f" stroke="#000" stroke-width="18" /><path d="M-75 -17H85L125 58H-105Z" fill="#fff" stroke="none" stroke-width="0" /><path d="M-90 103H100L150 193H-140Z" fill="#00ff7f" stroke="#000" stroke-width="14" /><path d="M-145 193H155" fill="none" stroke="#000" stroke-width="18" /></g><g transform="translate(1765,0)"><path d="M138 492V133Q138 108 163 108H330L385 163V492Z" fill="#fff" stroke="#111" stroke-width="20" /><path d="M150 482V140Q150 120 170 120H310Q330 120 330 140V482Z" fill="#00ff7f" stroke="none" stroke-width="0" /></g><g transform="translate(2145,322) scale(0.65)"><path d="M-185 -52H185V143H-185Z" fill="#000" stroke="none" stroke-width="0" /><path d="M-90 -192H95V-42H-90Z" fill="#00ff7f" stroke="#000" stroke-width="18" /><path d="M-75 -17H85L125 58H-105Z" fill="#fff" stroke="none" stroke-width="0" /><path d="M-90 103H100L150 193H-140Z" fill="#00ff7f" stroke="#000" stroke-width="14" /><path d="M-145 193H155" fill="none" stroke="#000" stroke-width="18" /></g></g>
</svg>
<svg style="left:0;top:64px" width="1100" height="48" viewBox="0 64 1100 48">
<g transform="translate(380,66) scale(0.07305) "><path d="M145 150V375L205 330L265 460L300 440L245 315L310 305Z" fill="#fff" stroke="#2a2a2a" stroke-width="11" stroke-linejoin="round"/><path d="M134 158V378" fill="none" stroke="#a0a0a0" stroke-width="9" /><path d="M745 500V173Q745 138 780 138H933L983 188V500Z" fill="#fff" stroke="#8c8c8c" stroke-width="14" /><path d="M757 490V176Q757 150 785 150H948Q973 150 973 178V490Z" fill="#bdbdbd" stroke="none" stroke-width="0" /><path d="M908 462V135Q908 100 943 100H1096L1146 150V462Z" fill="#fff" stroke="#8c8c8c" stroke-width="14" /><path d="M920 452V138Q920 112 948 112H1061Q1086 112 1086 140V452Z" fill="#bdbdbd" stroke="none" stroke-width="0" /><path d="M835 305L980 225V270H1050V340H980V385Z" fill="#fff" stroke="#8c8c8c" stroke-width="14" /><path d="M1495 462V135Q1495 100 1530 100H1683L1733 150V462Z" fill="#fff" stroke="#8c8c8c" stroke-width="14" /><path d="M1507 452V138Q1507 112 1535 112H1643Q1668 112 1668 140V452Z" fill="#bdbdbd" stroke="none" stroke-width="0" /><path d="M1333 500V173Q1333 138 1368 138H1521L1571 188V500Z" fill="#fff" stroke="#8c8c8c" stroke-width="14" /><path d="M1345 490V176Q1345 150 1373 150H1491Q1516 150 1516 178V490Z" fill="#bdbdbd" stroke="none" stroke-width="0" /><path d="M1640 305L1495 225V270H1420V340H1495V385Z" fill="#fff" stroke="#8c8c8c" stroke-width="14" /><path d="M2065 495V175Q2065 105 2135 105H2245Q2315 105 2315 175V495Z" fill="none" stroke="#000" stroke-width="18" stroke-dasharray="48 26"/><path d="M2292 265L2335 410M2345 265L2300 410" fill="none" stroke="#000" stroke-width="12" /><circle cx="2272" cy="440" r="24" fill="none" stroke="#000" stroke-width="12"/><circle cx="2357" cy="440" r="24" fill="none" stroke="#000" stroke-width="12"/></g>
<g transform="translate(560,66) scale(0.07305) "><path d="M335 462V135Q335 100 370 100H523L573 150V462Z" fill="#fff" stroke="#222" stroke-width="20" /><path d="M347 452V138Q347 112 375 112H488Q513 112 513 140V452Z" fill="#00ff7f" stroke="none" stroke-width="0" /><path d="M170 500V173Q170 138 205 138H358L408 188V500Z" fill="#fff" stroke="#222" stroke-width="20" /><path d="M182 490V176Q182 150 210 150H328Q353 150 353 178V490Z" fill="#00ff7f" stroke="none" stroke-width="0" /><path d="M923 462V135Q923 100 958 100H1111L1161 150V462Z" fill="#fff" stroke="#222" stroke-width="20" /><path d="M935 452V138Q935 112 963 112H1076Q1101 112 1101 140V452Z" fill="#00ff7f" stroke="none" stroke-width="0" /><path d="M758 500V173Q758 138 793 138H946L996 188V500Z" fill="#fff" stroke="#222" stroke-width="20" /><path d="M770 490V176Q770 150 798 150H916Q941 150 941 178V490Z" fill="#00ff7f" stroke="none" stroke-width="0" /><path d="M899 288.5H962.5V225H1017.5V288.5H1081V343.5H1017.5V407H962.5V343.5H899Z" fill="#000" stroke="none" stroke-width="0" /><path d="M1650 115V495M1760 115V495M1868 115V495M1565 198H1950M1565 305H1950M1565 415H1950" fill="none" stroke="#000" stroke-width="20" /></g>
<g transform="translate(706,66) scale(0.07305) "><path d="M203 100V185M203 240V345M300 455H395M455 455H555" fill="none" stroke="#000" stroke-width="30" /><path d="M158 455H248M203 410V500" fill="none" stroke="#000" stroke-width="30" /><g transform="translate(0,0)"><path d="M500 108L548 155L350 350L260 395L305 305Z" fill="#fff" stroke="#000" stroke-width="14" stroke-linejoin="round"/><path d="M338 338L528 150" fill="none" stroke="#00ff7f" stroke-width="26" /><path d="M260 395L283 350L305 372Z" fill="#000" stroke="#000" stroke-width="6" /></g><g transform="translate(617,-5)"><path d="M500 108L548 155L350 350L260 395L305 305Z" fill="#fff" stroke="#000" stroke-width="14" stroke-linejoin="round"/><path d="M338 338L528 150" fill="none" stroke="#00ff7f" stroke-width="26" /><path d="M260 395L283 350L305 372Z" fill="#000" stroke="#000" stroke-width="6" /></g><path d="M1110 282A105 105 0 1 1 1030 385" fill="none" stroke="#000" stroke-width="14" /><path d="M1085 275L1138 248L1132 305Z" fill="#000" stroke="#000" stroke-width="4" /><circle cx="1655" cy="300" r="60" fill="none" stroke="#000" stroke-width="16"/><path d="M1701 344L1800 440" fill="none" stroke="#000" stroke-width="30" /><path d="M1655 105L1715 185L1595 185Z" fill="#00ff7f" stroke="#000" stroke-width="12" /><path d="M1655 490L1595 415L1715 415Z" fill="#00ff7f" stroke="#000" stroke-width="12" /><path d="M1460 300L1545 245L1545 355Z" fill="#00ff7f" stroke="#000" stroke-width="12" /><path d="M1855 300L1770 245L1770 355Z" fill="#00ff7f" stroke="#000" stroke-width="12" /><circle cx="2245" cy="300" r="60" fill="none" stroke="#000" stroke-width="16"/><path d="M2291 344L2390 440" fill="none" stroke="#000" stroke-width="30" /><path d="M2245 185L2185 105L2305 105Z" fill="#00ff7f" stroke="#000" stroke-width="12" /><path d="M2245 415L2185 495L2305 495Z" fill="#00ff7f" stroke="#000" stroke-width="12" /><path d="M2130 300L2045 245L2045 355Z" fill="#00ff7f" stroke="#000" stroke-width="12" /><path d="M2360 300L2445 245L2445 355Z" fill="#00ff7f" stroke="#000" stroke-width="12" /></g>
<g transform="translate(886,66) scale(0.07305) "><circle cx="368" cy="298" r="60" fill="none" stroke="#000" stroke-width="16"/><path d="M414 342L515 440" fill="none" stroke="#000" stroke-width="30" /><path d="M305 235L215 145M430 235L520 145M305 365L225 455" fill="none" stroke="#000" stroke-width="14" /><path d="M165 95L270 120L185 200Z" fill="#00ff7f" stroke="#000" stroke-width="12" /><path d="M575 95L470 120L555 195Z" fill="#00ff7f" stroke="#000" stroke-width="12" /><path d="M165 500L185 400L265 485Z" fill="#00ff7f" stroke="#000" stroke-width="12" /><circle cx="997" cy="185" r="60" fill="none" stroke="#000" stroke-width="16"/><path d="M1043 230L1145 330" fill="none" stroke="#000" stroke-width="30" /><path d="M990 465A110 110 0 1 0 808 400" fill="none" stroke="#000" stroke-width="14" /><path d="M775 398L850 398L812 442Z" fill="#000" stroke="#000" stroke-width="4" /><path d="M1345 158H1685V497H1345Z" fill="#fff" stroke="#b4b4b4" stroke-width="12" /><circle cx="1583" cy="298" r="58" fill="none" stroke="#000" stroke-width="16"/><path d="M1629 340L1735 435" fill="none" stroke="#000" stroke-width="30" /><path d="M1642 155H1742M1692 105V205" fill="none" stroke="#000" stroke-width="14" /><path d="M2087 160L2137 215H2105V292H2182V260L2237 310L2182 360V328H2105V405H2137L2087 460L2037 405H2069V328H1992V360L1937 310L1992 260V292H2069V215H2037Z" fill="#00ff7f" stroke="#18c870" stroke-width="8" /><circle cx="2190" cy="185" r="60" fill="none" stroke="#000" stroke-width="16"/><path d="M2234 231L2335 335" fill="none" stroke="#000" stroke-width="30" /></g>
</svg>
<svg style="left:0;top:146px" width="50" height="620" viewBox="0 146 50 620">
<g transform="translate(0,150) scale(0.13480) "><path d="M93 130L275 310" fill="none" stroke="#000" stroke-width="9.5" /><path d="M245 298L313 298L279 332Z" fill="#000" stroke="#000" stroke-width="2" /><circle cx="185" cy="532" r="98" fill="none" stroke="#000" stroke-width="9.5"/><path d="M245 608L313 608L279 642Z" fill="#000" stroke="#000" stroke-width="2" /><path d="M90 775C105 745 140 740 150 790C160 840 130 900 150 930C170 960 200 900 215 840C230 780 255 750 268 790C278 830 278 880 280 925" fill="none" stroke="#000" stroke-width="9.5" /><path d="M245 925L313 925L279 959Z" fill="#000" stroke="#000" stroke-width="2" /><ellipse cx="185" cy="1155" rx="108" ry="72" transform="rotate(-38 185 1155)" fill="none" stroke="#000" stroke-width="9.5"/><path d="M245 1235L313 1235L279 1269Z" fill="#000" stroke="#000" stroke-width="2" /></g>
<g transform="translate(0,330) scale(0.13480) "><path d="M135 88A47 47 0 0 0 135 182H285" fill="none" stroke="#000" stroke-width="9.5" /><path d="M245 210L313 210L279 244Z" fill="#000" stroke="#000" stroke-width="2" /><path d="M105 365H267V452H105Z" fill="none" stroke="#000" stroke-width="9.5" /><circle cx="105" cy="458" r="18" fill="#00ff7f" stroke="#000" stroke-width="8"/><path d="M112 468L175 478L155 498L203 535L185 553L137 515L122 535Z" fill="#fff" stroke="#000" stroke-width="9" stroke-linejoin="round"/><path d="M245 522L313 522L279 556Z" fill="#000" stroke="#000" stroke-width="2" /><path d="M97 735V830M272 735V830M120 788H250" fill="none" stroke="#000" stroke-width="9.5" /><path d="M105 788L140 770L140 806Z" fill="#00ff7f" stroke="#000" stroke-width="6" /><path d="M265 788L230 770L230 806Z" fill="#00ff7f" stroke="#000" stroke-width="6" /><path d="M245 835L313 835L279 869Z" fill="#000" stroke="#000" stroke-width="2" /><text x="185" y="752" font-family="Liberation Sans,sans-serif" font-weight="bold" font-size="92" text-anchor="middle" fill="#000">A</text><path d="M252 995A98 98 0 1 0 283 1068" fill="none" stroke="#000" stroke-width="9.5" /><path d="M258 998L222 975L232 1008Z" fill="#000" stroke="#000" stroke-width="4" /><path d="M245 1145L313 1145L279 1179Z" fill="#000" stroke="#000" stroke-width="2" /><path d="M185 1010L207 1036H193V1060H217V1046L243 1068L217 1090V1076H193V1100H207L185 1126L163 1100H177V1076H153V1090L127 1068L153 1046V1060H177V1036H163Z" fill="#00ff7f" stroke="#18c870" stroke-width="5" /><path d="M97 1292V1375M272 1292V1375M120 1327H250" fill="none" stroke="#000" stroke-width="9.5" /><path d="M105 1327L140 1309L140 1345Z" fill="#00ff7f" stroke="#000" stroke-width="6" /><path d="M265 1327L230 1309L230 1345Z" fill="#00ff7f" stroke="#000" stroke-width="6" /><path d="M97 1400H272V1470H97Z" fill="#00ff7f" stroke="#10a060" stroke-width="6" /><path d="M130 1400V1435M160 1400V1425M190 1400V1435M220 1400V1425M250 1400V1435" fill="none" stroke="#0a7a48" stroke-width="8" /><path d="M245 1455L313 1455L279 1489Z" fill="#000" stroke="#000" stroke-width="2" /></g>
<g transform="translate(0,520) scale(0.13480) "><text x="166" y="487" font-family="Liberation Sans,sans-serif" font-size="236" text-anchor="middle" fill="#000">A</text><path d="M258 305V495M230 303H285M230 497H285" fill="none" stroke="#555" stroke-width="12" /><path d="M85 612H288V812H85Z" fill="#fff" stroke="#555" stroke-width="9" /><path d="M95 620L285 775M165 615L288 715M225 612L288 665M88 680L250 812M88 750L165 812" fill="none" stroke="#333" stroke-width="7" /><path d="M100 960H160Q190 915 220 960H265V1065H100Z" fill="#f4f4f4" stroke="#555" stroke-width="9" /><path d="M130 960V1065" fill="none" stroke="#555" stroke-width="8" /><circle cx="187" cy="1013" r="38" fill="#00ff7f" stroke="#20c070" stroke-width="4"/><path d="M105 1355V1255H265V1355" fill="none" stroke="#000" stroke-width="9.5" /><path d="M160 1355H245" fill="none" stroke="#000" stroke-width="9.5" /><circle cx="123" cy="1372" r="42" fill="none" stroke="#000" stroke-width="10"/><circle cx="265" cy="1357" r="26" fill="#00ff7f" stroke="#20c070" stroke-width="4"/><circle cx="184" cy="1645" r="27" fill="#00ff7f" stroke="#10a060" stroke-width="6"/></g>
</svg>
<svg style="left:0;top:1619px" width="1000" height="46" viewBox="0 1619 1000 46">
<g transform="translate(56,1620) scale(0.07305) "><path d="M150 280H505M320 110V465" fill="none" stroke="#000" stroke-width="16" stroke-dasharray="30 16"/><circle cx="785" cy="125" r="30" fill="#00ff7f" stroke="#000" stroke-width="12"/><circle cx="785" cy="233" r="30" fill="#00ff7f" stroke="#000" stroke-width="12"/><circle cx="785" cy="341" r="30" fill="#00ff7f" stroke="#000" stroke-width="12"/><circle cx="785" cy="449" r="30" fill="#00ff7f" stroke="#000" stroke-width="12"/><circle cx="917" cy="125" r="30" fill="#00ff7f" stroke="#000" stroke-width="12"/><circle cx="917" cy="233" r="30" fill="#00ff7f" stroke="#000" stroke-width="12"/><circle cx="917" cy="341" r="30" fill="#00ff7f" stroke="#000" stroke-width="12"/><circle cx="917" cy="449" r="30" fill="#00ff7f" stroke="#000" stroke-width="12"/><circle cx="1047" cy="125" r="30" fill="#00ff7f" stroke="#000" stroke-width="12"/><circle cx="1047" cy="233" r="30" fill="#00ff7f" stroke="#000" stroke-width="12"/><circle cx="1047" cy="341" r="30" fill="#00ff7f" stroke="#000" stroke-width="12"/><circle cx="1047" cy="449" r="30" fill="#00ff7f" stroke="#000" stroke-width="12"/><path d="M1430 118L1677 362" fill="none" stroke="#000" stroke-width="14" /><path d="M1350 212Q1560 250 1582 440" fill="none" stroke="#2a1a1a" stroke-width="12" /><circle cx="1430" cy="118" r="40" fill="#00ff7f" stroke="#000" stroke-width="12"/><circle cx="1350" cy="212" r="40" fill="#00ff7f" stroke="#000" stroke-width="12"/><circle cx="1677" cy="362" r="40" fill="#00ff7f" stroke="#000" stroke-width="12"/><circle cx="1582" cy="440" r="40" fill="#00ff7f" stroke="#000" stroke-width="12"/><path d="M2018 118L2265 362" fill="none" stroke="#000" stroke-width="14" /><path d="M1922 225Q2130 260 2155 455" fill="none" stroke="#2a1a1a" stroke-width="12" /><circle cx="2018" cy="118" r="38" fill="#00ff7f" stroke="#000" stroke-width="12"/><circle cx="2100" cy="197" r="38" fill="#00ff7f" stroke="#000" stroke-width="12"/><circle cx="2185" cy="283" r="38" fill="#00ff7f" stroke="#000" stroke-width="12"/><circle cx="2265" cy="362" r="38" fill="#00ff7f" stroke="#000" stroke-width="12"/><circle cx="1922" cy="225" r="38" fill="#00ff7f" stroke="#000" stroke-width="12"/><circle cx="2085" cy="292" r="38" fill="#00ff7f" stroke="#000" stroke-width="12"/><circle cx="2155" cy="455" r="38" fill="#00ff7f" stroke="#000" stroke-width="12"/></g>
<g transform="translate(228,1620) scale(0.07305) "><path d="M245 80L535 370" fill="none" stroke="#000" stroke-width="16" /><path d="M140 215A258 258 0 0 1 400 470" fill="none" stroke="#2a1a1a" stroke-width="16" /><circle cx="390" cy="225" r="40" fill="#00ff7f" stroke="#000" stroke-width="12"/><circle cx="173" cy="440" r="40" fill="#00ff7f" stroke="#000" stroke-width="12"/><path d="M835 80L1125 370" fill="none" stroke="#000" stroke-width="16" /><path d="M730 215A258 258 0 0 1 990 470" fill="none" stroke="#2a1a1a" stroke-width="16" /><circle cx="980" cy="225" r="40" fill="#00ff7f" stroke="#000" stroke-width="12"/><circle cx="908" cy="295" r="40" fill="#00ff7f" stroke="#000" stroke-width="12"/><path d="M1405 100L1695 385" fill="none" stroke="#000" stroke-width="16" /><path d="M1300 235A258 258 0 0 1 1560 485" fill="none" stroke="#2a1a1a" stroke-width="16" /><circle cx="1505" cy="195" r="38" fill="#00ff7f" stroke="#000" stroke-width="12"/><circle cx="1537" cy="380" r="38" fill="#00ff7f" stroke="#000" stroke-width="12"/><path d="M1590 195L1675 155L1675 240Z" fill="#00ff7f" stroke="#000" stroke-width="12" /><path d="M1455 380L1375 335L1375 420Z" fill="#00ff7f" stroke="#000" stroke-width="12" /><path d="M1945 140L2245 435M2245 140L1945 435" fill="none" stroke="#000" stroke-width="16" /><path d="M2062 252H2128Q2133 252 2133 257V323Q2133 328 2128 328H2062Q2057 328 2057 323V257Q2057 252 2062 252Z" fill="#00ff7f" stroke="#000" stroke-width="12" /></g>
<g transform="translate(408,1620) scale(0.07305) "><path d="M152 238H530V352H152Z" fill="#fff" stroke="none" stroke-width="0" /><path d="M152 247H530M152 343H530" fill="none" stroke="#66ffb0" stroke-width="22" /><path d="M152 294H530" fill="none" stroke="#000" stroke-width="16" /><circle cx="343" cy="294" r="38" fill="#00ff7f" stroke="#000" stroke-width="12"/><path d="M865 100H980V475H865Z" fill="#fff" stroke="none" stroke-width="0" /><path d="M875 100V475M970 100V475" fill="none" stroke="#66ffb0" stroke-width="22" /><path d="M922 100V475" fill="none" stroke="#000" stroke-width="16" /><circle cx="922" cy="288" r="40" fill="#00ff7f" stroke="#000" stroke-width="12"/><path d="M1328 238H1695V352H1328ZM1455 110H1570V480H1455Z" fill="#fff" stroke="none" stroke-width="0" /><path d="M1328 247H1455M1570 247H1695M1328 343H1455M1570 343H1695M1465 110V238M1560 110V238M1465 352V480M1560 352V480" fill="none" stroke="#66ffb0" stroke-width="22" /><path d="M1328 294H1695M1512 110V480" fill="none" stroke="#000" stroke-width="16" /><circle cx="1512" cy="294" r="38" fill="#00ff7f" stroke="#000" stroke-width="12"/><g transform="translate(0,0)"><path d="M2285 135V390M2285 262H2420" fill="none" stroke="#333" stroke-width="14" /><circle cx="2285" cy="262" r="52" fill="#00ff7f" stroke="#000" stroke-width="16" stroke-dasharray="30 18"/><path d="M2055 360L2180 235L2225 285L2300 255L2318 275L2245 345L2200 400L2140 435Z" fill="#fff" stroke="#000" stroke-width="14" stroke-linejoin="round"/><path d="M2180 235L2225 285L2200 310" fill="none" stroke="#000" stroke-width="12" /></g></g>
<g transform="translate(588,1620) scale(0.07305) "><path d="M152 141H357V298H152Z" fill="#000" stroke="#000" stroke-width="8" stroke-linejoin="round"/><path d="M177 141V131A78 78 0 0 1 333 131V141" fill="none" stroke="#000" stroke-width="20" /><g transform="translate(-1827,63)"><path d="M2285 135V390M2285 262H2420" fill="none" stroke="#333" stroke-width="14" /><circle cx="2285" cy="262" r="52" fill="#00ff7f" stroke="#000" stroke-width="16" stroke-dasharray="30 18"/><path d="M2055 360L2180 235L2225 285L2300 255L2318 275L2245 345L2200 400L2140 435Z" fill="#fff" stroke="#000" stroke-width="14" stroke-linejoin="round"/><path d="M2180 235L2225 285L2200 310" fill="none" stroke="#000" stroke-width="12" /></g><path d="M1005 145H1325V388H1005Z" fill="#f0f0f0" stroke="none" stroke-width="0" /><path d="M1012 152H1070V381H1012Z" fill="#00ff7f" stroke="none" stroke-width="0" /><path d="M1005 145H1325V388H1005Z" fill="none" stroke="#000" stroke-width="16" /><path d="M1140 388H1190V427H1140Z" fill="#000" stroke="none" stroke-width="0" /><path d="M1058 432H1270" fill="none" stroke="#000" stroke-width="14" /><path d="M1603 158H1923V401H1603Z" fill="#cce4f7" stroke="none" stroke-width="0" /><path d="M1860 165H1918V394H1860Z" fill="#00ff7f" stroke="none" stroke-width="0" /><path d="M1603 158H1923V401H1603Z" fill="none" stroke="#000" stroke-width="16" /><path d="M1738 401H1788V440H1738Z" fill="#000" stroke="none" stroke-width="0" /><path d="M1656 445H1868" fill="none" stroke="#000" stroke-width="14" /><path d="M2180 145H2500V388H2180Z" fill="#f0f0f0" stroke="none" stroke-width="0" /><path d="M2187 152H2493V205H2187Z" fill="#00ff7f" stroke="none" stroke-width="0" /><path d="M2180 145H2500V388H2180Z" fill="none" stroke="#000" stroke-width="16" /><path d="M2315 388H2365V427H2315Z" fill="#000" stroke="none" stroke-width="0" /><path d="M2233 432H2445" fill="none" stroke="#000" stroke-width="14" /></g>
<g transform="translate(780,1620) scale(0.07305) "><path d="M140 145H460V388H140Z" fill="#f0f0f0" stroke="none" stroke-width="0" /><path d="M147 318H456V381H147Z" fill="#00ff7f" stroke="none" stroke-width="0" /><path d="M140 145H460V388H140Z" fill="none" stroke="#000" stroke-width="16" /><path d="M275 388H325V427H275Z" fill="#000" stroke="none" stroke-width="0" /><path d="M193 432H405" fill="none" stroke="#000" stroke-width="14" /><path d="M728 145H1048V388H728Z" fill="#f0f0f0" stroke="none" stroke-width="0" /><path d="M782 193H918V298H782Z" fill="#00ff7f" stroke="none" stroke-width="0" /><path d="M728 145H1048V388H728Z" fill="none" stroke="#000" stroke-width="16" /><path d="M863 388H913V427H863Z" fill="#000" stroke="none" stroke-width="0" /><path d="M781 432H993" fill="none" stroke="#000" stroke-width="14" /><path d="M1496 272.0H1557.0V211H1619.0V272.0H1680V334.0H1619.0V395H1557.0V334.0H1496Z" fill="#000" stroke="none" stroke-width="0" /><path d="M1730 108H1865Q1890 108 1890 133V458Q1890 483 1865 483H1730Q1705 483 1705 458V133Q1705 108 1730 108Z" fill="#f6f6f6" stroke="#a8a8a8" stroke-width="16" /><path d="M1745 178H1855" fill="none" stroke="#aaa" stroke-width="22" /><path d="M1745 238H1855M1745 294H1855M1745 362H1855M1745 418H1855" fill="none" stroke="#888" stroke-width="14" /><path d="M2086 272.0H2147.0V211H2209.0V272.0H2270V334.0H2209.0V395H2147.0V334.0H2086Z" fill="#000" stroke="none" stroke-width="0" /><path d="M2318 108H2445Q2470 108 2470 133V458Q2470 483 2445 483H2318Q2293 483 2293 458V133Q2293 108 2318 108Z" fill="#f6f6f6" stroke="#a8a8a8" stroke-width="16" /><path d="M2300 272H2470V292H2300ZM2300 455H2470V478H2300ZM2448 120H2470V280H2448ZM2448 300H2470V470H2448Z" fill="#00ff7f" stroke="none" stroke-width="0" /><path d="M2293 296H2470" fill="none" stroke="#888" stroke-width="12" /><path d="M2345 245L2430 160" fill="none" stroke="#222" stroke-width="12" /><circle cx="2385" cy="390" r="52" fill="none" stroke="#333" stroke-width="12"/></g>
</svg>
<svg style="left:500px;top:1664px" width="120" height="66" viewBox="500 1664 120 66"><g transform="translate(500,1664) scale(0.04870) "><path d="M1005 390V320C1005 230 930 180 830 185C720 195 660 260 625 380C605 470 570 550 490 550C420 545 370 510 320 470" fill="none" stroke="#000" stroke-width="40" stroke-linecap="round"/><path d="M797 390H1218Q1318 390 1318 490V1150Q1318 1250 1218 1250H797Q697 1250 697 1150V490Q697 390 797 390Z" fill="#fff" stroke="#000" stroke-width="38" /><path d="M925 408H1095V700H925Z" fill="#00ff7f" stroke="none" stroke-width="0" /><path d="M697 718H1318M903 390V718M1110 390V718" fill="none" stroke="#000" stroke-width="34" /></g></svg>
<svg style="left:2530px;top:1218px" width="342" height="260" viewBox="2530 1218 342 260">
<g transform="translate(2530,1218) scale(0.07305) "><path d="M228 273Q358 118 488 273Q358 428 228 273Z" fill="#fff" stroke="#000" stroke-width="18" stroke-linejoin="round"/><circle cx="358" cy="273" r="66" fill="#00ff7f" stroke="#000" stroke-width="12"/><circle cx="356" cy="275" r="34" fill="#000"/><circle cx="384" cy="243" r="12" fill="#fff" fill-opacity="0.9"/><path d="M897 273Q1027 118 1157 273Q1027 428 897 273Z" fill="#f4f4f4" stroke="#9a9a9a" stroke-width="18" stroke-linejoin="round"/><circle cx="1027" cy="273" r="66" fill="#9a9a9a" stroke="#9a9a9a" stroke-width="12"/><circle cx="1025" cy="275" r="34" fill="#8a8a8a"/><circle cx="1053" cy="243" r="12" fill="#fff" fill-opacity="0.5"/><path d="M1597 238H1802V395H1597Z" fill="#c8c8c8" stroke="#c8c8c8" stroke-width="8" stroke-linejoin="round"/><path d="M1622 238V228A78 78 0 0 1 1778 228V238" fill="none" stroke="#c8c8c8" stroke-width="20" /></g>
<g transform="translate(2692,1218) scale(0.07305) "><path d="M48 235H253V392H48Z" fill="#000" stroke="#000" stroke-width="8" stroke-linejoin="round"/><path d="M73 235V225A78 78 0 0 1 229 225V235" fill="none" stroke="#000" stroke-width="20" /><path d="M770 155H870V225H940V322H870V392H770V322H700V225H770Z" fill="#00ff7f" stroke="#1f9a5a" stroke-width="8" /><path d="M1370 225H1612V322H1370Z" fill="#00ff7f" stroke="#1f9a5a" stroke-width="8" /><path d="M2180 145L2255 215L2125 340L2050 345V270Z" fill="#00ff7f" stroke="#000" stroke-width="12" stroke-linejoin="round"/><path d="M2045 350C2080 360 2120 370 2135 405" fill="none" stroke="#333" stroke-width="9" /><path d="M2150 250L2270 362" fill="none" stroke="#000" stroke-width="44" /><path d="M2172 262L2275 358" fill="none" stroke="#fff" stroke-width="12" /><path d="M2135 232L2185 250L2150 285Z" fill="#000" stroke="none" stroke-width="0" /></g>
<clipPath id="tblc"><rect x="2533" y="1264" width="320" height="211"/></clipPath><g clip-path="url(#tblc)"><g transform="translate(2530,1218) scale(0.07305) "><g transform="translate(0,0.0)"><path d="M115 862Q245 707 375 862Q245 1017 115 862Z" fill="#fff" stroke="#000" stroke-width="18" stroke-linejoin="round"/><circle cx="245" cy="862" r="66" fill="#00ff7f" stroke="#000" stroke-width="12"/><circle cx="243" cy="864" r="34" fill="#000"/><circle cx="271" cy="832" r="12" fill="#fff" fill-opacity="0.9"/><path d="M528 825H733V982H528Z" fill="#c8c8c8" stroke="#c8c8c8" stroke-width="8" stroke-linejoin="round"/><path d="M553 825V815A78 78 0 0 1 709 815V825" fill="none" stroke="#c8c8c8" stroke-width="20" /><g transform="translate(1013,860) scale(0.65)"><path d="M-185 -52H185V143H-185Z" fill="#000" stroke="none" stroke-width="0" /><path d="M-90 -192H95V-42H-90Z" fill="#00ff7f" stroke="#000" stroke-width="18" /><path d="M-75 -17H85L125 58H-105Z" fill="#fff" stroke="none" stroke-width="0" /><path d="M-90 103H100L150 193H-140Z" fill="#00ff7f" stroke="#000" stroke-width="14" /><path d="M-145 193H155" fill="none" stroke="#000" stroke-width="18" /></g><path d="M1338 732V995M1450 732V995" fill="none" stroke="#808080" stroke-width="48" /><path d="M1262 815H1530M1262 910H1530" fill="none" stroke="#808080" stroke-width="40" /></g><g transform="translate(0,506.5)"><path d="M115 862Q245 707 375 862Q245 1017 115 862Z" fill="#fff" stroke="#000" stroke-width="18" stroke-linejoin="round"/><circle cx="245" cy="862" r="66" fill="#00ff7f" stroke="#000" stroke-width="12"/><circle cx="243" cy="864" r="34" fill="#000"/><circle cx="271" cy="832" r="12" fill="#fff" fill-opacity="0.9"/><path d="M528 825H733V982H528Z" fill="#c8c8c8" stroke="#c8c8c8" stroke-width="8" stroke-linejoin="round"/><path d="M553 825V815A78 78 0 0 1 709 815V825" fill="none" stroke="#c8c8c8" stroke-width="20" /><g transform="translate(1013,860) scale(0.65)"><path d="M-185 -52H185V143H-185Z" fill="#000" stroke="none" stroke-width="0" /><path d="M-90 -192H95V-42H-90Z" fill="#00ff7f" stroke="#000" stroke-width="18" /><path d="M-75 -17H85L125 58H-105Z" fill="#fff" stroke="none" stroke-width="0" /><path d="M-90 103H100L150 193H-140Z" fill="#00ff7f" stroke="#000" stroke-width="14" /><path d="M-145 193H155" fill="none" stroke="#000" stroke-width="18" /></g><path d="M1338 732V995M1450 732V995" fill="none" stroke="#808080" stroke-width="48" /><path d="M1262 815H1530M1262 910H1530" fill="none" stroke="#808080" stroke-width="40" /></g><g transform="translate(0,1013.1)"><path d="M115 862Q245 707 375 862Q245 1017 115 862Z" fill="#fff" stroke="#000" stroke-width="18" stroke-linejoin="round"/><circle cx="245" cy="862" r="66" fill="#00ff7f" stroke="#000" stroke-width="12"/><circle cx="243" cy="864" r="34" fill="#000"/><circle cx="271" cy="832" r="12" fill="#fff" fill-opacity="0.9"/><path d="M528 825H733V982H528Z" fill="#c8c8c8" stroke="#c8c8c8" stroke-width="8" stroke-linejoin="round"/><path d="M553 825V815A78 78 0 0 1 709 815V825" fill="none" stroke="#c8c8c8" stroke-width="20" /><g transform="translate(1013,860) scale(0.65)"><path d="M-185 -52H185V143H-185Z" fill="#000" stroke="none" stroke-width="0" /><path d="M-90 -192H95V-42H-90Z" fill="#00ff7f" stroke="#000" stroke-width="18" /><path d="M-75 -17H85L125 58H-105Z" fill="#fff" stroke="none" stroke-width="0" /><path d="M-90 103H100L150 193H-140Z" fill="#00ff7f" stroke="#000" stroke-width="14" /><path d="M-145 193H155" fill="none" stroke="#000" stroke-width="18" /></g><path d="M1338 732V995M1450 732V995" fill="none" stroke="#808080" stroke-width="48" /><path d="M1262 815H1530M1262 910H1530" fill="none" stroke="#808080" stroke-width="40" /></g><g transform="translate(0,1519.6)"><path d="M115 862Q245 707 375 862Q245 1017 115 862Z" fill="#fff" stroke="#000" stroke-width="18" stroke-linejoin="round"/><circle cx="245" cy="862" r="66" fill="#00ff7f" stroke="#000" stroke-width="12"/><circle cx="243" cy="864" r="34" fill="#000"/><circle cx="271" cy="832" r="12" fill="#fff" fill-opacity="0.9"/><path d="M528 825H733V982H528Z" fill="#c8c8c8" stroke="#c8c8c8" stroke-width="8" stroke-linejoin="round"/><path d="M553 825V815A78 78 0 0 1 709 815V825" fill="none" stroke="#c8c8c8" stroke-width="20" /><g transform="translate(1013,860) scale(0.65)"><path d="M-185 -52H185V143H-185Z" fill="#000" stroke="none" stroke-width="0" /><path d="M-90 -192H95V-42H-90Z" fill="#00ff7f" stroke="#000" stroke-width="18" /><path d="M-75 -17H85L125 58H-105Z" fill="#fff" stroke="none" stroke-width="0" /><path d="M-90 103H100L150 193H-140Z" fill="#00ff7f" stroke="#000" stroke-width="14" /><path d="M-145 193H155" fill="none" stroke="#000" stroke-width="18" /></g><path d="M1338 732V995M1450 732V995" fill="none" stroke="#808080" stroke-width="48" /><path d="M1262 815H1530M1262 910H1530" fill="none" stroke="#808080" stroke-width="40" /></g><g transform="translate(0,2026.1)"><path d="M115 862Q245 707 375 862Q245 1017 115 862Z" fill="#fff" stroke="#000" stroke-width="18" stroke-linejoin="round"/><circle cx="245" cy="862" r="66" fill="#00ff7f" stroke="#000" stroke-width="12"/><circle cx="243" cy="864" r="34" fill="#000"/><circle cx="271" cy="832" r="12" fill="#fff" fill-opacity="0.9"/><path d="M528 825H733V982H528Z" fill="#c8c8c8" stroke="#c8c8c8" stroke-width="8" stroke-linejoin="round"/><path d="M553 825V815A78 78 0 0 1 709 815V825" fill="none" stroke="#c8c8c8" stroke-width="20" /><g transform="translate(1013,860) scale(0.65)"><path d="M-185 -52H185V143H-185Z" fill="#000" stroke="none" stroke-width="0" /><path d="M-90 -192H95V-42H-90Z" fill="#00ff7f" stroke="#000" stroke-width="18" /><path d="M-75 -17H85L125 58H-105Z" fill="#fff" stroke="none" stroke-width="0" /><path d="M-90 103H100L150 193H-140Z" fill="#00ff7f" stroke="#000" stroke-width="14" /><path d="M-145 193H155" fill="none" stroke="#000" stroke-width="18" /></g><path d="M1338 732V995M1450 732V995" fill="none" stroke="#808080" stroke-width="48" /><path d="M1262 815H1530M1262 910H1530" fill="none" stroke="#808080" stroke-width="40" /></g><g transform="translate(0,2532.7)"><path d="M115 862Q245 707 375 862Q245 1017 115 862Z" fill="#fff" stroke="#000" stroke-width="18" stroke-linejoin="round"/><circle cx="245" cy="862" r="66" fill="#00ff7f" stroke="#000" stroke-width="12"/><circle cx="243" cy="864" r="34" fill="#000"/><circle cx="271" cy="832" r="12" fill="#fff" fill-opacity="0.9"/><path d="M528 825H733V982H528Z" fill="#c8c8c8" stroke="#c8c8c8" stroke-width="8" stroke-linejoin="round"/><path d="M553 825V815A78 78 0 0 1 709 815V825" fill="none" stroke="#c8c8c8" stroke-width="20" /><g transform="translate(1013,860) scale(0.65)"><path d="M-185 -52H185V143H-185Z" fill="#000" stroke="none" stroke-width="0" /><path d="M-90 -192H95V-42H-90Z" fill="#00ff7f" stroke="#000" stroke-width="18" /><path d="M-75 -17H85L125 58H-105Z" fill="#fff" stroke="none" stroke-width="0" /><path d="M-90 103H100L150 193H-140Z" fill="#00ff7f" stroke="#000" stroke-width="14" /><path d="M-145 193H155" fill="none" stroke="#000" stroke-width="18" /></g><path d="M1338 732V995M1450 732V995" fill="none" stroke="#808080" stroke-width="48" /><path d="M1262 815H1530M1262 910H1530" fill="none" stroke="#808080" stroke-width="40" /></g></g></g>
</svg>
</body></html>
